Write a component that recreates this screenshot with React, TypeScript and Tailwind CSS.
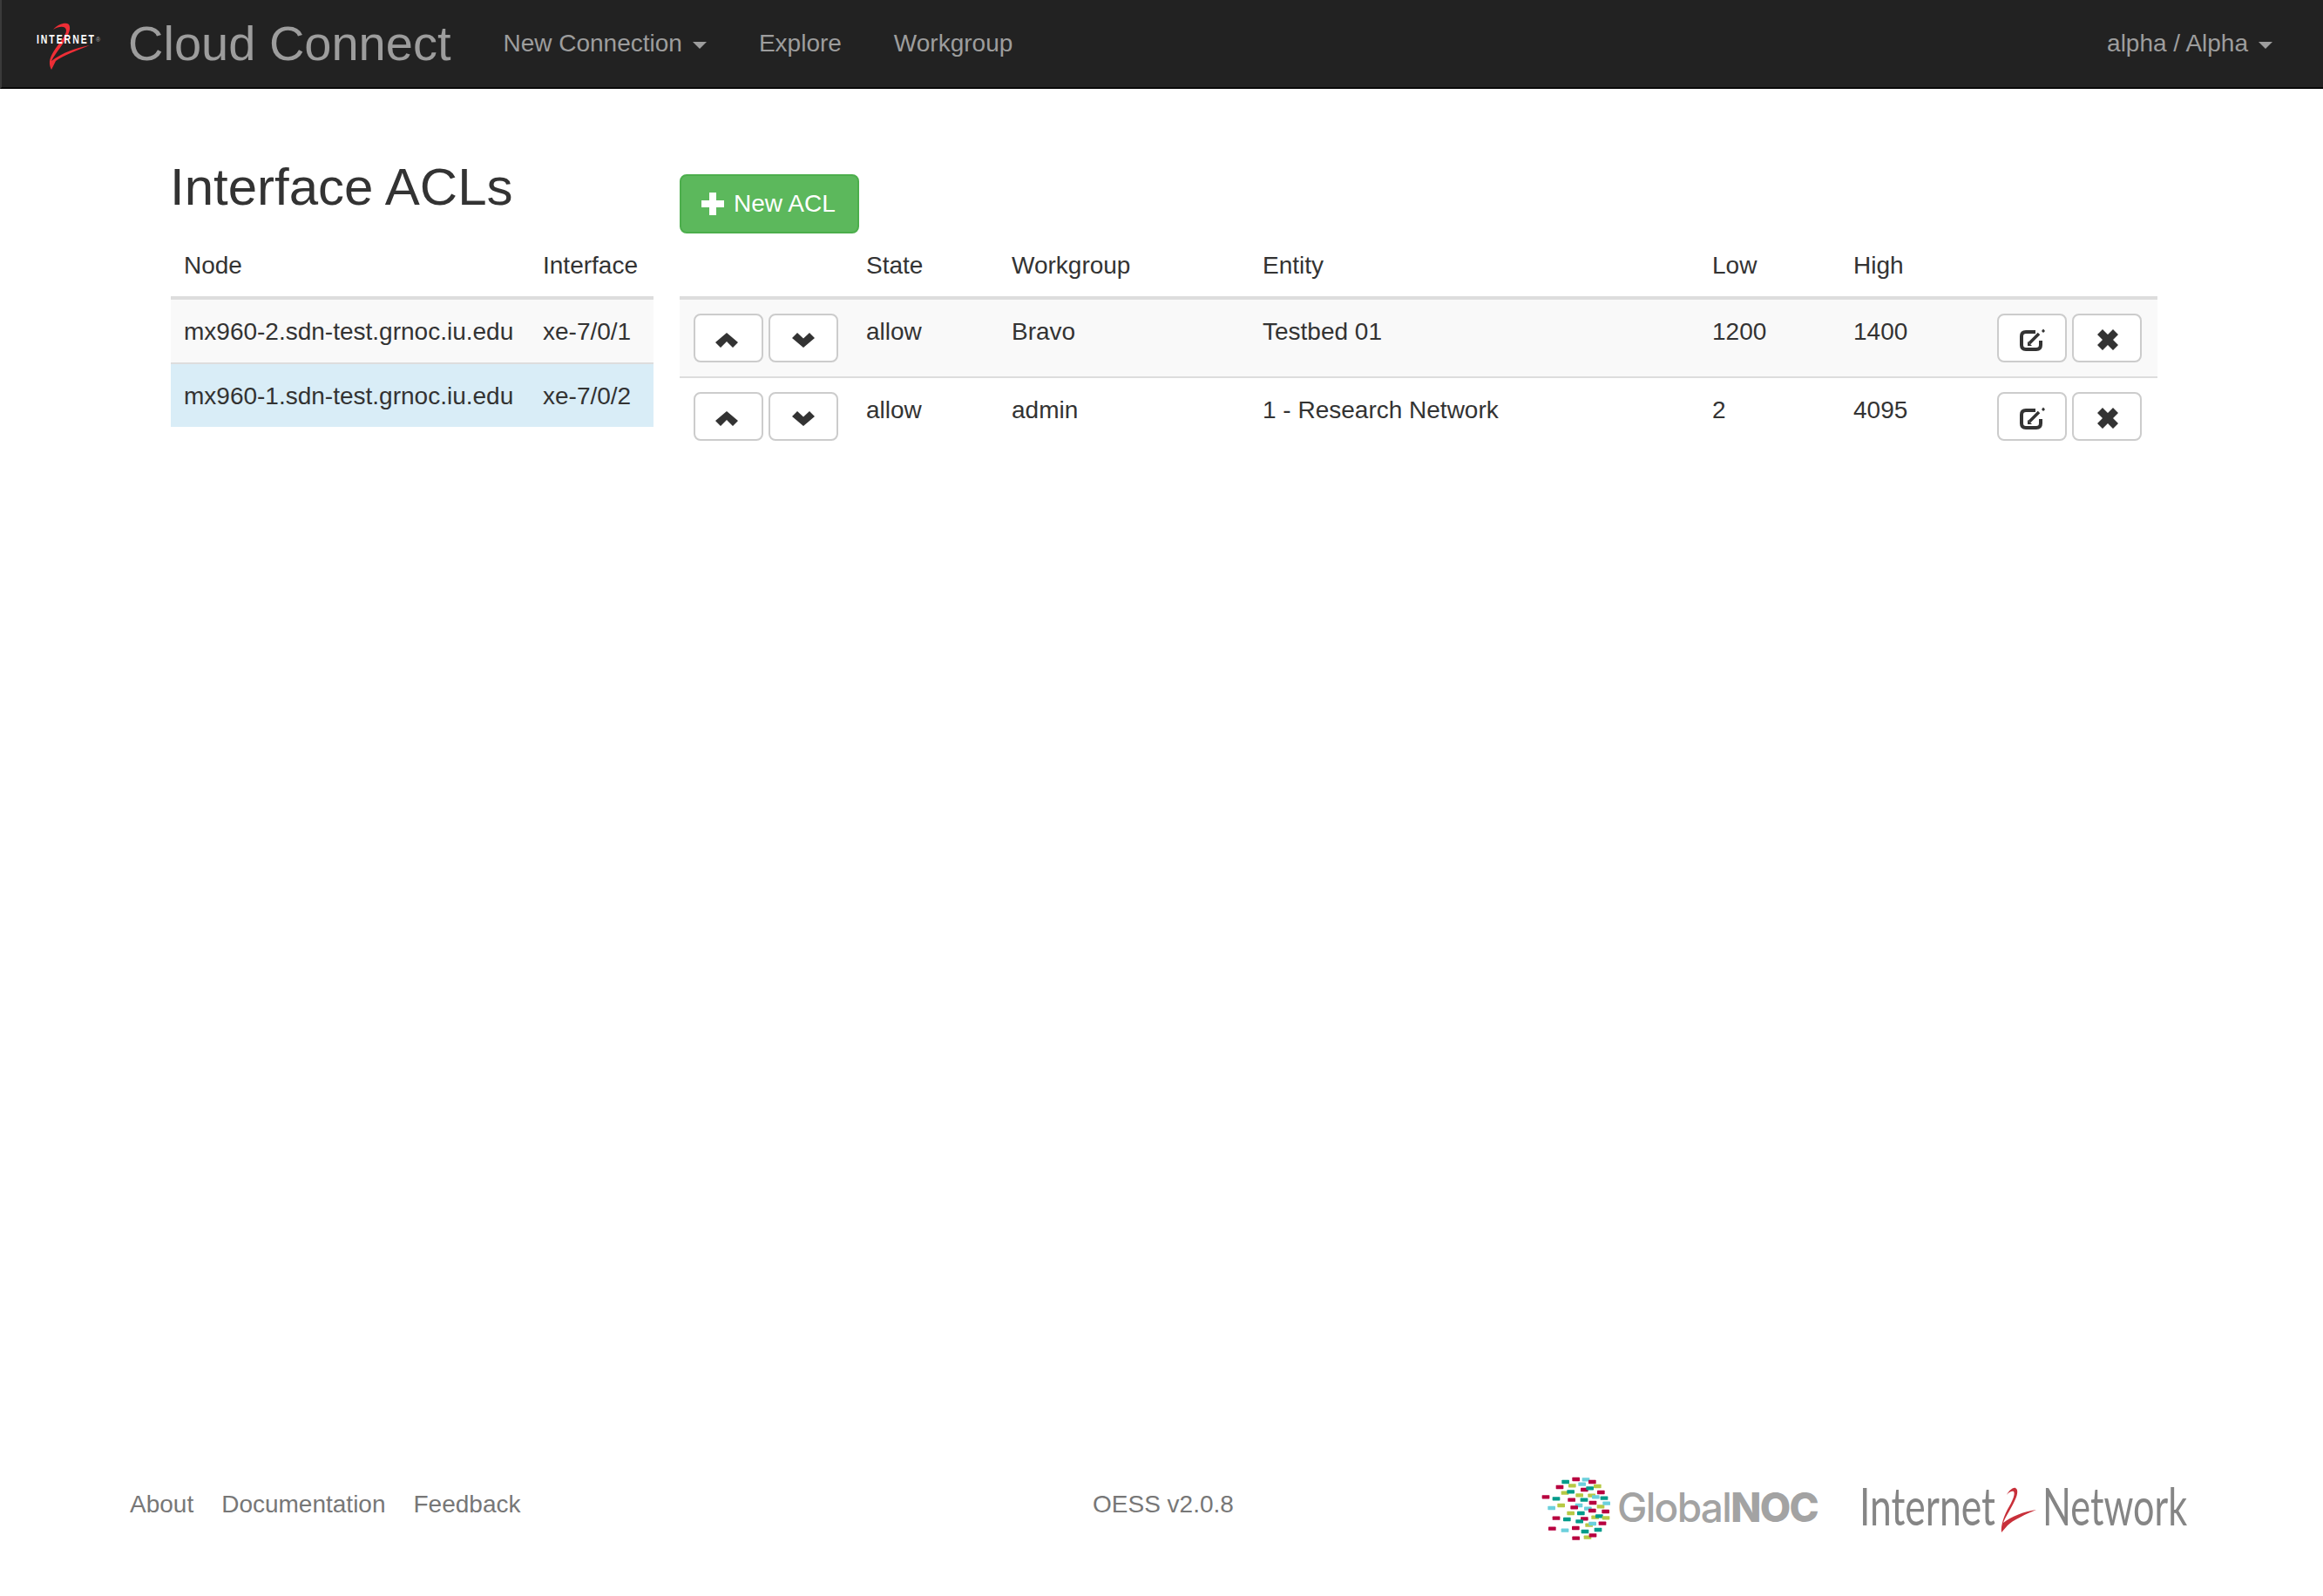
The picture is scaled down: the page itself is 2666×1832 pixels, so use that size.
const F = "font-['Liberation_Sans',Arial,sans-serif]";

function Caret() {
  return <span className="ml-[12px] inline-block w-0 h-0 align-middle border-x-[8px] border-x-transparent border-t-[8px] border-t-[#9d9d9d]" />;
}

function I2Logo() {
  return (
    <div className="relative w-[74px] h-[84px] ml-[40px] shrink-0">
      <svg viewBox="0 0 74 84" className="absolute left-0 top-0 w-[74px] h-[84px]">
        <path d="M19 26 C24 20 31 18 35 19 C39 20 39 26 36 32 C31 43 22 52 17 62 C30 52 45 47 61 44 C46 50 30 56 22 62 L17 72 C14 66 14 60 19 52 C25 42 34 33 34 27 C34 22 27 21 19 26 Z" fill="#ee2e36" />
      </svg>
      <span className="absolute left-0 top-[27px] inline-block origin-left scale-x-[0.7] text-[15px] leading-[20px] font-bold text-white tracking-[2.75px] whitespace-nowrap">INTERNET</span>
      <span className="absolute left-[68px] top-[30px] text-[7px] leading-[16px] text-[#aaa]">®</span>
    </div>
  );
}

function Chevron({ up }: { up?: boolean }) {
  return (
    <svg viewBox="0 0 26 17" className={up ? "w-[26px] h-[17px] mt-[5px] mr-[4px]" : "w-[26px] h-[17px] mt-[5px]"}>
      <path d={up ? "M0 11 L13 0 L26 11 L20 17 L13 10 L6 17 Z" : "M0 6 L6 0 L13 6.5 L20 0 L26 6 L13 17 Z"} fill="#333" />
    </svg>
  );
}

function EditIcon() {
  return (
    <svg viewBox="0 0 29 26" className="w-[29px] h-[26px] mt-[4px]">
      <path d="M18 4 H7 Q2 4 2 9 V19 Q2 24 7 24 H19 Q24 24 24 19 V14" fill="none" stroke="#333" strokeWidth="4" />
      <path d="M11 17 L22 6" fill="none" stroke="#333" strokeWidth="3.5" />
      <path d="M25 3 L27 0.5 L29 3 L27 5 Z" fill="#333" />
      <path d="M9 15 L9 20 L14 20 Z" fill="#333" />
    </svg>
  );
}

function XIcon() {
  return (
    <svg viewBox="0 0 24 24" className="w-[24px] h-[24px] mt-[4px] ml-[2px]">
      <path d="M0 6 L6 0 L12 6 L18 0 L24 6 L18 12 L24 18 L18 24 L12 18 L6 24 L0 18 L6 12 Z" fill="#333" />
    </svg>
  );
}

function Btn({ children }: { children: React.ReactNode }) {
  return (
    <button className="w-[80px] h-[56px] flex items-center justify-center bg-white border-2 border-[#ccc] rounded-[8px]">
      {children}
    </button>
  );
}

const acls = [
  { state: "allow", wg: "Bravo", entity: "Testbed 01", low: "1200", high: "1400" },
  { state: "allow", wg: "admin", entity: "1 - Research Network", low: "2", high: "4095" },
];

const dots: [number, number, string][] = [
  [72,115,"c"],[108,121,"t"],[92,153,"y"],[125,144,"l"],[120,81,"c"],[140,63,"t"],[176,54,"c"],[210,55,"y"],[163,76,"l"],[197,71,"y"],[232,63,"c"],[250,78,"l"],[138,101,"l"],[158,97,"t"],[205,90,"c"],[224,85,"t"],[188,109,"l"],[230,110,"l"],[244,115,"y"],[262,99,"c"],[273,119,"t"],[161,125,"c"],[204,125,"t"],[234,135,"c"],[186,144,"y"],[170,151,"c"],[217,155,"y"],[232,162,"c"],[261,148,"l"],[281,137,"y"],[158,171,"l"],[193,171,"t"],[278,165,"c"],[108,188,"c"],[145,192,"t"],[205,190,"c"],[188,199,"t"],[242,185,"l"],[256,181,"t"],[279,187,"l"],[94,224,"c"],[138,230,"y"],[175,222,"c"],[221,212,"l"],[233,207,"y"],[267,206,"c"],[207,234,"t"],[252,228,"t"],[176,257,"c"],[216,254,"l"],[234,247,"c"],
];
const dotColor: Record<string, string> = { c: "#b8003f", t: "#009b8a", y: "#6bd0dc", l: "#b6c944" };

export default function App() {
  return (
    <div className={`${F} h-screen flex flex-col bg-white text-[28px] leading-[40px] text-[#333]`}>
      <nav className="h-[102px] shrink-0 flex items-center bg-[#222] border-b-2 border-b-[#080808] border-l-2 border-l-[#3a3a3a] text-[#9d9d9d]">
        <I2Logo />
        <span className="ml-[31px] text-[56px] leading-[80px]">Cloud Connect</span>
        <span className="ml-[30px] px-[30px] whitespace-nowrap">New Connection<Caret /></span>
        <span className="px-[30px]">Explore</span>
        <span className="px-[30px]">Workgroup</span>
        <span className="ml-auto pr-[58px] whitespace-nowrap">alpha / Alpha<Caret /></span>
      </nav>

      <main className="flex-1 flex items-start pl-[196px] pr-[190px] pt-[40px] gap-[30px]">
        <div className="w-[554px] shrink-0">
          <h2 className="text-[60px] leading-[66px] font-normal mt-[40px] mb-[20px] -ml-[1px]">Interface ACLs</h2>
          <table className="w-full table-fixed border-collapse">
            <colgroup>
              <col className="w-[411px]" />
              <col />
            </colgroup>
            <thead>
              <tr className="border-b-4 border-b-[#ddd]">
                <th className="pl-[15px] pr-[16px] pt-[17px] pb-[15px] font-normal text-left h-[72px]">Node</th>
                <th className="pl-[16px] pr-0 pt-[17px] pb-[15px] font-normal text-left whitespace-nowrap">Interface</th>
              </tr>
            </thead>
            <tbody>
              <tr className="bg-[#f9f9f9] border-b-2 border-b-[#ddd]">
                <td className="pl-[15px] pr-[16px] pt-[17px] pb-[15px] whitespace-nowrap">mx960-2.sdn-test.grnoc.iu.edu</td>
                <td className="pl-[16px] pr-0 pt-[17px] pb-[15px] whitespace-nowrap">xe-7/0/1</td>
              </tr>
              <tr className="bg-[#d9edf7]">
                <td className="pl-[15px] pr-[16px] pt-[17px] pb-[15px] whitespace-nowrap">mx960-1.sdn-test.grnoc.iu.edu</td>
                <td className="pl-[16px] pr-0 pt-[17px] pb-[15px] whitespace-nowrap">xe-7/0/2</td>
              </tr>
            </tbody>
          </table>
        </div>

        <div className="flex-1 pt-[58px]">
          <button className="h-[68px] w-[206px] pl-[23px] flex items-center gap-[11px] bg-[#5cb85c] border-2 border-[#4cae4c] rounded-[8px] text-white">
            <svg viewBox="0 0 26 26" className="w-[26px] h-[26px]">
              <path d="M9 0 H17 V9 H26 V17 H17 V26 H9 V17 H0 V9 H9 Z" fill="#fff" />
            </svg>
            New ACL
          </button>
          <table className="w-full table-fixed border-collapse">
            <colgroup>
              <col className="w-[198px]" />
              <col className="w-[167px]" />
              <col className="w-[288px]" />
              <col className="w-[516px]" />
              <col className="w-[162px]" />
              <col className="w-[165px]" />
              <col />
            </colgroup>
            <thead>
              <tr className="border-b-4 border-b-[#ddd] text-left">
                <th className="p-[16px] h-[72px]" />
                <th className="px-[16px] pt-[17px] pb-[15px] font-normal text-left">State</th>
                <th className="px-[16px] pt-[17px] pb-[15px] font-normal text-left">Workgroup</th>
                <th className="px-[16px] pt-[17px] pb-[15px] font-normal text-left">Entity</th>
                <th className="px-[16px] pt-[17px] pb-[15px] font-normal text-left">Low</th>
                <th className="px-[16px] pt-[17px] pb-[15px] font-normal text-left">High</th>
                <th className="p-[16px]" />
              </tr>
            </thead>
            <tbody>
              {acls.map((a, i) => (
                <tr key={i} className={i === 0 ? "bg-[#f9f9f9] border-b-2 border-b-[#ddd]" : ""}>
                  <td className="p-[16px] align-top">
                    <div className="flex gap-[6px]">
                      <Btn><Chevron up /></Btn>
                      <Btn><Chevron /></Btn>
                    </div>
                  </td>
                  <td className="px-[16px] pt-[17px] pb-[15px] align-top">{a.state}</td>
                  <td className="px-[16px] pt-[17px] pb-[15px] align-top">{a.wg}</td>
                  <td className="px-[16px] pt-[17px] pb-[15px] align-top">{a.entity}</td>
                  <td className="px-[16px] pt-[17px] pb-[15px] align-top">{a.low}</td>
                  <td className="px-[16px] pt-[17px] pb-[15px] align-top">{a.high}</td>
                  <td className="p-[16px] align-top">
                    <div className="flex gap-[6px]">
                      <Btn><EditIcon /></Btn>
                      <Btn><XIcon /></Btn>
                    </div>
                  </td>
                </tr>
              ))}
            </tbody>
          </table>
        </div>
      </main>

      <footer className="h-[212px] shrink-0 flex items-start pl-[149px] pt-[57px] text-[#777]">
        <div className="w-[1105px] h-[100px] flex gap-[32px] items-center shrink-0">
          <span>About</span>
          <span>Documentation</span>
          <span>Feedback</span>
        </div>
        <div className="w-[556px] h-[100px] flex items-center shrink-0">OESS v2.0.8</div>
        <svg viewBox="0 0 360 300" className="w-[120px] h-[100px] mt-[3px] -ml-[60px] shrink-0">
          {dots.map(([x, y, c], i) => (
            <rect key={i} x={x - 13} y={y - 6.5} width="26" height="13" rx="2" fill={dotColor[c]} />
          ))}
        </svg>
        <div className="h-[100px] mt-[3px] flex items-center -ml-[14px] text-[46px] font-medium tracking-[-1.7px] text-[#a3a3a3] font-['Inter',sans-serif] shrink-0">
          Global<b className="font-extrabold">NOC</b>
        </div>
        <div className="h-[100px] mt-[1px] flex items-center ml-[48px] text-[#858585] shrink-0 font-['Lato',sans-serif] text-[60px] whitespace-nowrap">
          <span className="inline-block w-[158px] scale-x-[0.74] origin-left">Internet</span>
          <svg viewBox="0 0 42 52" className="w-[42px] h-[52px] ml-[3px] mt-[10px]">
            <path d="M8 9 C11 3 16 0 18 1 C22 3 20 10 17 16 C13 25 7 33 4 41 C13 34 27 28 42 26 C30 31 15 38 9 44 L2 52 C1 44 5 32 11 22 C15 15 18 8 16 5 C14 4 10 6 8 9 Z" fill="#c8303a" />
          </svg>
          <span className="inline-block w-[167px] ml-[7px] scale-x-[0.72] origin-left">Network</span>
        </div>
      </footer>
    </div>
  );
}
